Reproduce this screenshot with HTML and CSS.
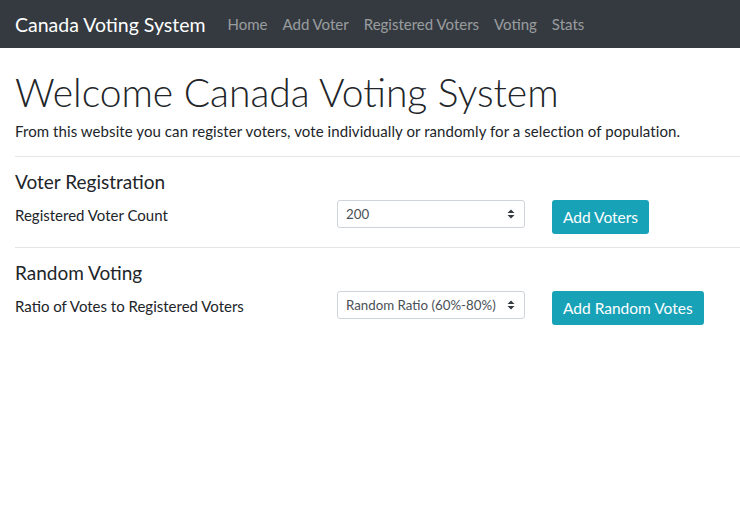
FILE: index.html
```html
<!DOCTYPE html>
<html lang="en">
<head>
<meta charset="utf-8">
<title>Canada Voting System</title>
<link rel="stylesheet" href="styles.css">
</head>
<body>
<nav class="navbar">
  <a class="brand" href="#">Canada Voting System</a>
  <ul class="nav">
    <li><a href="#">Home</a></li>
    <li><a href="#">Add Voter</a></li>
    <li><a href="#">Registered Voters</a></li>
    <li><a href="#">Voting</a></li>
    <li><a href="#">Stats</a></li>
  </ul>
</nav>
<main class="content">
  <h1 class="title">Welcome Canada Voting System</h1>
  <p class="lead">From this website you can register voters, vote individually or randomly for a selection of population.</p>
  <hr class="divider">
  <section class="panel">
    <h4 class="panel-title">Voter Registration</h4>
    <div class="form-row">
      <label class="form-label">Registered Voter Count</label>
      <div class="select">
        <span class="select-value">200</span>
        <svg class="caret" width="8" height="12" viewBox="0 0 8 12"><path d="M4 1.5 L7.5 5 H0.5 Z M4 10.5 L7.5 7 H0.5 Z" fill="#343a40"/></svg>
      </div>
      <button class="btn">Add Voters</button>
    </div>
  </section>
  <hr class="divider">
  <section class="panel">
    <h4 class="panel-title">Random Voting</h4>
    <div class="form-row">
      <label class="form-label">Ratio of Votes to Registered Voters</label>
      <div class="select">
        <span class="select-value">Random Ratio (60%-80%)</span>
        <svg class="caret" width="8" height="12" viewBox="0 0 8 12"><path d="M4 1.5 L7.5 5 H0.5 Z M4 10.5 L7.5 7 H0.5 Z" fill="#343a40"/></svg>
      </div>
      <button class="btn">Add Random Votes</button>
    </div>
  </section>
</main>
</body>
</html>
```
FILE: styles.css
```css
* { box-sizing: border-box; }
html, body { margin: 0; padding: 0; }
body {
  font-family: "Lato", "Open Sans", sans-serif;
  font-size: 15px;
  color: #212529;
  background: #fff;
}
.navbar {
  height: 48px;
  background: #343a40;
  display: flex;
  align-items: center;
  padding: 0 15px;
}
.brand {
  color: #fff;
  font-size: 19.5px;
  text-decoration: none;
  margin-right: 22px;
}
.nav {
  list-style: none;
  display: flex;
  margin: 0;
  padding: 0;
  gap: 15px;
}
.nav a {
  color: rgba(255,255,255,0.5);
  text-decoration: none;
  font-size: 15px;
}
.content {
  padding-left: 15px;
}
.title {
  font-size: 39px;
  font-weight: 300;
  margin: 21px 0 0;
  line-height: 1.2;
}
.lead {
  margin: 4px 0 14px;
  line-height: 1.5;
  letter-spacing: 0.08px;
}
.divider {
  border: 0;
  border-top: 1px solid #e5e5e5;
  margin: 0;
}
.panel {
  padding: 14px 0 13px;
}
.panel-title {
  font-size: 19px;
  font-weight: 400;
  margin: 0 0 6px;
  line-height: 1.2;
}
.form-row {
  display: flex;
  align-items: flex-start;
}
.form-label {
  width: 322px;
  line-height: 28px;
  margin-top: 1px;
}
.select {
  width: 188px;
  height: 28px;
  border: 1px solid #ced4da;
  border-radius: 3px;
  display: flex;
  align-items: center;
  justify-content: space-between;
  padding: 0 9px 0 8px;
  font-size: 13.3px;
  color: #495057;
}
.btn {
  margin-left: 27px;
  background: #17a2b8;
  color: #fff;
  border: 0;
  border-radius: 3px;
  height: 34px;
  padding: 0 11px;
  font-family: inherit;
  font-size: 15.5px;
}
```
